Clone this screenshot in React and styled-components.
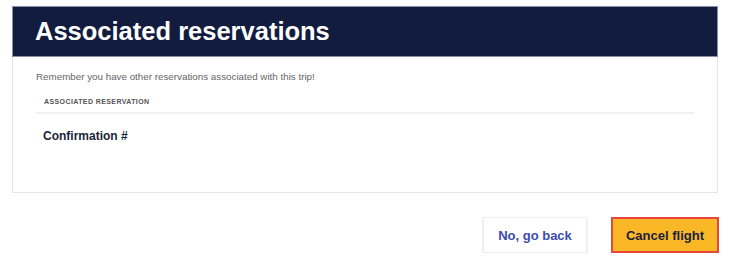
import React from "react";
import styled, { createGlobalStyle } from "styled-components";

const GlobalStyle = createGlobalStyle`
  body {
    margin: 0;
    background: #ffffff;
    font-family: "Liberation Sans", Arial, sans-serif;
  }
`;

const Page = styled.div`
  width: 706px;
  padding: 6px 0 0 12px;
`;

const Card = styled.div`
  border: 1px solid #e6e6e6;
  border-top: none;
  background: #ffffff;
`;

const Header = styled.div`
  height: 51px;
  margin: 0 -1px;
  box-sizing: border-box;
  display: flex;
  align-items: center;
  padding-left: 22px;
  background-color: #121c3f;
  border: 1px solid #8a8fa3;
`;

const Title25 = styled.h1`
  margin: 0;
  font-size: 25.5px;
  font-weight: bold;
  color: #ffffff;
`;

const Body = styled.div`
  padding: 13px 23px 0;
  height: 135px;
  box-sizing: border-box;
`;

const Notice = styled.p`
  margin: 0;
  font-size: 9.8px;
  line-height: 14px;
  color: #666666;
`;

const Table = styled.div`
  margin-top: 6px;
`;

const HeadRow = styled.div`
  padding: 0 8px;
  height: 22px;
  display: flex;
  align-items: center;
  border-bottom: 2px solid #f0f0f0;
`;

const HeadCell = styled.span`
  font-size: 7px;
  font-weight: bold;
  letter-spacing: 0.4px;
  color: #555555;
`;

const Row = styled.div`
  padding: 0 7px;
  height: 44px;
  display: flex;
  align-items: center;
`;

const Title12 = styled.span`
  font-size: 12px;
  font-weight: bold;
  color: #1b1f3b;
`;

const Actions = styled.div`
  display: flex;
  justify-content: flex-end;
  gap: 24px;
  margin-top: 24px;
  margin-right: -1px;
`;

const Button = styled.button`
  height: 36px;
  box-sizing: border-box;
  padding: 0;
  width: ${(props) => props.width}px;
  font-family: "Liberation Sans", Arial, sans-serif;
  font-size: 13px;
  font-weight: bold;
  cursor: pointer;
  color: ${(props) => (props.primary ? "#1b1f3b" : "#3b4cb0")};
  background-color: ${(props) => (props.primary ? "#fbb826" : "#ffffff")};
  border: ${(props) =>
    props.primary ? "2px solid #e8453c" : "1px solid #ececec"};
  box-shadow: ${(props) =>
    props.primary ? "none" : "0 1px 2px rgba(0, 0, 0, 0.12)"};
`;

export default function App() {
  return (
    <>
      <GlobalStyle />
      <Page>
        <Card>
          <Header>
            <Title25>Associated reservations</Title25>
          </Header>
          <Body>
            <Notice>Remember you have other reservations associated with this trip!</Notice>
            <Table>
              <HeadRow>
                <HeadCell>ASSOCIATED RESERVATION</HeadCell>
              </HeadRow>
              <Row>
                <Title12>Confirmation #</Title12>
              </Row>
            </Table>
          </Body>
        </Card>
        <Actions>
          <Button width={104}>No, go back</Button>
          <Button primary width={108}>Cancel flight</Button>
        </Actions>
      </Page>
    </>
  );
}
